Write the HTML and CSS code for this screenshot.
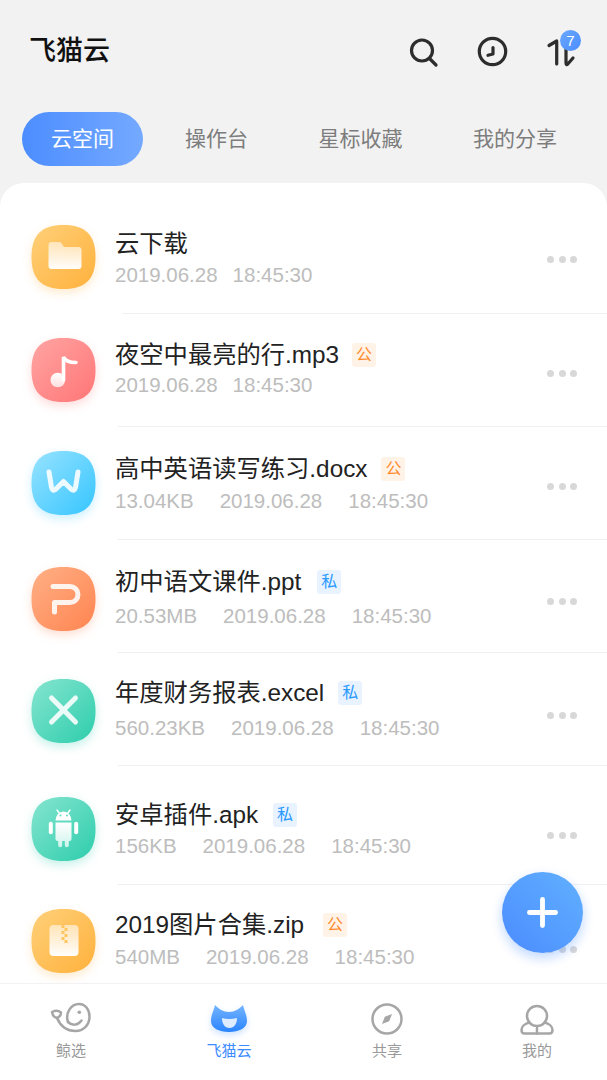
FILE: index.html
```html
<!DOCTYPE html>
<html lang="zh-CN">

<head>
    <meta charset="utf-8">
    <title>飞猫云</title>
    <link rel="stylesheet" href="styles.css">
</head>

<body>
    <!-- gradients used by the file icons -->
    <svg class="defs" aria-hidden="true">
        <defs>
            <path id="blob" d="M32 0C54 0 64 10 64 32C64 54 54 64 32 64C10 64 0 54 0 32C0 10 10 0 32 0Z" />
            <linearGradient id="g-yellow" x1="0" y1="0" x2="1" y2="1"><stop offset="0" stop-color="#ffd079" /><stop offset="1" stop-color="#ffb13c" /></linearGradient>
            <linearGradient id="g-red" x1="0" y1="0" x2="1" y2="1"><stop offset="0" stop-color="#ffa5a3" /><stop offset="1" stop-color="#ff7576" /></linearGradient>
            <linearGradient id="g-blue" x1="0" y1="0" x2="1" y2="1"><stop offset="0" stop-color="#98e3ff" /><stop offset="1" stop-color="#35c5ff" /></linearGradient>
            <linearGradient id="g-orange" x1="0" y1="0" x2="1" y2="1"><stop offset="0" stop-color="#ffb086" /><stop offset="1" stop-color="#ff8450" /></linearGradient>
            <linearGradient id="g-green" x1="0" y1="0" x2="1" y2="1"><stop offset="0" stop-color="#86e5d0" /><stop offset="1" stop-color="#2dcdac" /></linearGradient>
            <linearGradient id="g-folder" x1="0" y1="0" x2="0" y2="1"><stop offset="0" stop-color="#fff" stop-opacity=".55" /><stop offset="1" stop-color="#fff" stop-opacity=".98" /></linearGradient>
            <linearGradient id="g-fade" x1="0" y1="0" x2="0" y2="1"><stop offset="0" stop-color="#fff" /><stop offset="1" stop-color="#fff" stop-opacity=".72" /></linearGradient>
            <linearGradient id="g-cat" x1="0" y1="0" x2="0" y2="1"><stop offset="0" stop-color="#74b4ff" /><stop offset="1" stop-color="#2b84ff" /></linearGradient>
        </defs>
    </svg>

    <header class="topbar">
        <h1 class="logo">飞猫云</h1>
        <div class="actions">
            <svg class="act" viewBox="0 0 29 29"><circle cx="13" cy="13.500" r="10.500" /><path d="M20.500 21.500L27 28" /></svg>
            <svg class="act" viewBox="0 0 29 29"><circle cx="14.500" cy="14.500" r="13.200" /><path d="M15 10.500V17L10 18.300" /></svg>
            <div class="act-wrap">
                <svg class="act" viewBox="0 0 29 29"><path d="M2 8.500L9.700 4V27" /><path d="M19 3V26Q19 28.500 20.800 27L26 21" /></svg>
                <span class="count">7</span>
            </div>
        </div>
    </header>

    <nav class="tabs">
        <a class="tab on">云空间</a>
        <a class="tab">操作台</a>
        <a class="tab">星标收藏</a>
        <a class="tab">我的分享</a>
    </nav>

    <main class="sheet">
        <div class="row r1">
            <svg class="ico ico-yellow" viewBox="0 0 64 64"><use href="#blob" fill="url(#g-yellow)" /><path d="M20 17h7.500a3 3 0 0 1 2.500 1.300L32.500 22H47a3 3 0 0 1 3 3v16a3 3 0 0 1-3 3H20a3 3 0 0 1-3-3V20a3 3 0 0 1 3-3z" fill="url(#g-folder)" /></svg>
            <div class="info">
                <div class="name">云下载</div>
                <div class="meta"><span>2019.06.28</span><span>18:45:30</span></div>
            </div>
            <div class="more"><i></i><i></i><i></i></div>
        </div>
        <hr class="sep sep-first">
        <div class="row r2">
            <svg class="ico ico-red" viewBox="0 0 64 64"><use href="#blob" fill="url(#g-red)" /><circle cx="26.300" cy="42" r="7.300" fill="url(#g-fade)" /><path d="M32 42V19c2 4.500 6.500 5.500 12.500 5.500" fill="none" stroke="#fff" stroke-width="3.600" stroke-linecap="round" /></svg>
            <div class="info">
                <div class="name">夜空中最亮的行.mp3<span class="tag pub">公</span></div>
                <div class="meta"><span>2019.06.28</span><span>18:45:30</span></div>
            </div>
            <div class="more"><i></i><i></i><i></i></div>
        </div>
        <hr class="sep">
        <div class="row r3">
            <svg class="ico ico-blue" viewBox="0 0 64 64"><use href="#blob" fill="url(#g-blue)" /><path class="mark" d="M17.500 21L20 36.500Q21 41 24.500 38L32 30.500L39.500 38Q43 41 44 36.500L46.500 21" /></svg>
            <div class="info">
                <div class="name">高中英语读写练习.docx<span class="tag pub">公</span></div>
                <div class="meta wide"><span>13.04KB</span><span>2019.06.28</span><span>18:45:30</span></div>
            </div>
            <div class="more"><i></i><i></i><i></i></div>
        </div>
        <hr class="sep">
        <div class="row r4">
            <svg class="ico ico-orange" viewBox="0 0 64 64"><use href="#blob" fill="url(#g-orange)" /><path class="mark" d="M23 45V35.500H38.500a8 8 0 0 0 0-16H21.500" /></svg>
            <div class="info">
                <div class="name">初中语文课件.ppt<span class="tag pri">私</span></div>
                <div class="meta wide"><span>20.53MB</span><span>2019.06.28</span><span>18:45:30</span></div>
            </div>
            <div class="more"><i></i><i></i><i></i></div>
        </div>
        <hr class="sep">
        <div class="row r5">
            <svg class="ico ico-green" viewBox="0 0 64 64"><use href="#blob" fill="url(#g-green)" /><path class="mark" d="M20 19L44 43M44 19L20 43" /></svg>
            <div class="info">
                <div class="name">年度财务报表.excel<span class="tag pri">私</span></div>
                <div class="meta wide"><span>560.23KB</span><span>2019.06.28</span><span>18:45:30</span></div>
            </div>
            <div class="more"><i></i><i></i><i></i></div>
        </div>
        <hr class="sep">
        <div class="row r6">
            <svg class="ico ico-green" viewBox="0 0 64 64"><use href="#blob" fill="url(#g-green)" /><path d="M24 23.500a8 9 0 0 1 16 0z" fill="#fff" /><path d="M25.500 13l2.500 3.500M38.500 13l-2.500 3.500" stroke="#fff" stroke-width="1.400" stroke-linecap="round" /><path d="M24 25.500h16V42a2 2 0 0 1-2 2h-.700v4.300a2 2 0 0 1-4 0V44h-2.600v4.300a2 2 0 0 1-4 0V44H26a2 2 0 0 1-2-2z" fill="url(#g-fade)" /><rect x="17.300" y="24.700" width="4" height="12.600" rx="2" fill="#fff" /><rect x="42.700" y="24.700" width="4" height="12.600" rx="2" fill="#fff" /><circle cx="29" cy="18.500" r="1" fill="#5ed9c0" /><circle cx="35.500" cy="18.500" r="1" fill="#5ed9c0" /></svg>
            <div class="info">
                <div class="name">安卓插件.apk<span class="tag pri">私</span></div>
                <div class="meta wide"><span>156KB</span><span>2019.06.28</span><span>18:45:30</span></div>
            </div>
            <div class="more"><i></i><i></i><i></i></div>
        </div>
        <hr class="sep">
        <div class="row r7">
            <svg class="ico ico-yellow" viewBox="0 0 64 64"><use href="#blob" fill="url(#g-yellow)" /><rect x="18" y="16" width="29" height="31" rx="4" fill="url(#g-folder)" /><path d="M30 16h3v3h-3zM33 19h3v3h-3zM30 22h3v3h-3zM33 25h3v3h-3zM30 28h3v3h-3zM33 31h3v3h-3z" fill="#ffc65f" /></svg>
            <div class="info">
                <div class="name">2019图片合集.zip<span class="tag pub">公</span></div>
                <div class="meta wide"><span>540MB</span><span>2019.06.28</span><span>18:45:30</span></div>
            </div>
            <div class="more"><i></i><i></i><i></i></div>
        </div>
    </main>

    <button class="fab"><svg viewBox="0 0 32 32"><path d="M16 2.500V29.500M2.500 16H29.500" /></svg></button>

    <footer class="tabbar">
        <a class="item">
            <svg class="nav-ico" viewBox="0 0 40 30"><path d="M17 19C14 10 20 1 28 1C34.500 1 38.500 7 38.500 13.500C38.500 22.500 32 28 24.500 28C15 28 9 22 6 15" /><path d="M6 15C3.500 14.500 1.500 12 1 9C4 7.500 7.500 7.500 10 9.500C10 11.500 8.500 14 6 15" /><path d="M17 19C21 23 27 22.500 30.500 17.500" /><circle class="dot" cx="28.300" cy="9.300" r="1.800" /></svg>
            <span>鲸选</span>
        </a>
        <a class="item on">
            <svg class="nav-ico" viewBox="0 0 40 30"><path d="M6 2C10 6 14 9 20 9C26 9 30 6 34 2C35 7 38 12 38 18C38 25 30 29 20 29C10 29 2 25 2 18C2 12 5 7 6 2Z" fill="url(#g-cat)" /><path d="M13 15Q20 17 28 15C28 21 25 25 20.500 25C16 25 13 21 13 15Z" fill="#dfecff" /></svg>
            <span>飞猫云</span>
        </a>
        <a class="item">
            <svg class="nav-ico" viewBox="0 0 40 30"><circle cx="20" cy="16" r="14.500" /><path class="dot" d="M25 11L22.200 18.200L15 21L17.800 13.800Z" /></svg>
            <span>共享</span>
        </a>
        <a class="item">
            <svg class="nav-ico" viewBox="0 0 40 30"><circle cx="20" cy="13" r="10" /><path d="M12.500 19.500C8 20.500 4.500 23.500 4.500 27C4.500 29 5.500 30.500 7.500 30.500H32.500C34.500 30.500 35.500 29 35.500 27C35.500 23.500 32 20.500 27.500 19.500" /><path d="M20 25V30.500" /></svg>
            <span>我的</span>
        </a>
    </footer>
</body>

</html>
```

FILE: styles.css
```css
* {
    box-sizing: border-box;
}

html,
body {
    margin: 0;
    width: 607px;
    height: 1080px;
    overflow: hidden;
}

body {
    position: relative;
    display: flex;
    flex-direction: column;
    background-color: #f2f2f2;
    color: #222;
    font-family: "Liberation Sans", "Noto Sans CJK SC", sans-serif;
}

.defs {
    position: absolute;
    width: 0;
    height: 0;
}

/* top bar */
.topbar {
    height: 96px;
    padding: 0 31px 0 29px;
    display: flex;
    align-items: center;
    justify-content: space-between;
}

.logo {
    margin: 0;
    font-size: 27px;
    font-weight: 500;
    color: #111;
}

.actions {
    display: flex;
    gap: 40px;
    margin-top: 7px;
}

.act {
    display: block;
    width: 29px;
    height: 29px;
    overflow: visible;
    fill: none;
    stroke: #2d2d2d;
    stroke-width: 3.200;
    stroke-linecap: round;
    stroke-linejoin: round;
}

.act-wrap {
    position: relative;
}

.count {
    position: absolute;
    top: -7px;
    right: -5px;
    width: 21px;
    height: 21px;
    border-radius: 50%;
    background: linear-gradient(135deg, #6aa8ff, #4a8dff);
    color: #fff;
    font-size: 15px;
    line-height: 21px;
    text-align: center;
}

/* tabs */
.tabs {
    margin-top: 16px;
    padding-left: 22px;
    height: 54px;
    display: flex;
    gap: 13.500px;
}

.tab {
    padding: 0 28.500px;
    font-size: 21px;
    line-height: 54px;
    color: #7d7d7d;
    white-space: nowrap;
}

.tab.on {
    padding: 0 29px;
    border-radius: 27px;
    background: linear-gradient(90deg, #4c8dff, #74a9ff);
    color: #fff;
}

/* file list */
.sheet {
    margin-top: 17px;
    flex: 1;
    min-height: 0;
    padding-top: 17px;
    overflow: hidden;
    background-color: #fff;
    border-radius: 24px 24px 0 0;
}

.row {
    height: 112px;
    padding: 0 30px 0 31px;
    display: flex;
    align-items: center;
}

.sep {
    margin: 0 0 0 118px;
    height: 1px;
    border: 0;
    background-color: #f0f0f0;
}

.sep-first {
    margin-left: 122px;
}

.ico {
    flex: none;
    width: 65px;
    height: 64px;
    overflow: visible;
}

.ico-yellow {
    filter: drop-shadow(0 4px 5px rgba(255, 184, 80, .28));
}

.ico-red {
    filter: drop-shadow(0 4px 5px rgba(255, 125, 125, .28));
}

.ico-blue {
    filter: drop-shadow(0 4px 5px rgba(70, 200, 255, .28));
}

.ico-orange {
    filter: drop-shadow(0 4px 5px rgba(255, 140, 90, .28));
}

.ico-green {
    filter: drop-shadow(0 4px 5px rgba(50, 205, 175, .28));
}

.mark {
    fill: none;
    stroke: #fff;
    stroke-opacity: .88;
    stroke-width: 5;
    stroke-linecap: round;
    stroke-linejoin: round;
}

.info {
    margin-left: 19px;
    display: flex;
    flex-direction: column;
    gap: 5px;
}

.name {
    display: flex;
    align-items: center;
    font-size: 24.300px;
    line-height: 28px;
    white-space: nowrap;
}

.tag {
    margin-left: 13px;
    width: 24px;
    height: 24px;
    border-radius: 3px;
    font-size: 16px;
    line-height: 24px;
    text-align: center;
}

.pub {
    background-color: #fff3e8;
    color: #ff8a2b;
}

.pri {
    background-color: #e8f3ff;
    color: #2b9aff;
}

.meta {
    display: flex;
    gap: 15px;
    font-size: 20.500px;
    line-height: 24px;
    color: #bdbdbd;
    white-space: nowrap;
}

.meta.wide {
    gap: 26px;
}

.more {
    margin-left: auto;
    margin-top: 6px;
    display: flex;
    gap: 4.500px;
}

.more i {
    width: 7px;
    height: 7px;
    border-radius: 50%;
    background-color: #d8d8d8;
}

/* the rows of the list are not quite even */
.r1 {
    height: 113px;
}

.r1 .info {
    margin-top: 4px;
}

.r2 .info {
    margin-top: -2px;
    gap: 4px;
}

.r3 .info {
    margin-top: 1px;
    gap: 6px;
}

.r3 .tag {
    margin-left: 14px;
}

.r4 {
    padding-top: 4px;
}

.r4 .ico {
    margin-top: 2px;
}

.r4 .info {
    gap: 8px;
}

.r4 .tag {
    margin-left: 16px;
}

.r5 .ico {
    margin-top: 4px;
}

.r5 .info {
    margin-top: 1px;
    gap: 9px;
}

.r5 .tag {
    margin-left: 14px;
}

.r5 .more {
    margin-top: 12px;
}

.r6 {
    height: 118px;
    padding-top: 6px;
}

.r6 .ico {
    margin-top: 2px;
}

.r6 .info {
    margin-top: 2px;
}

.r6 .tag {
    margin-left: 15px;
}

.r6 .more {
    margin-top: 14px;
}

.r7 {
    height: 97px;
    padding-top: 13px;
}

.r7 .ico {
    margin-top: 2px;
}

.r7 .info {
    gap: 6px;
}

.r7 .tag {
    margin-left: 19px;
}

.r7 .more {
    margin-top: 18px;
}

/* floating button */
.fab {
    position: absolute;
    left: 501.500px;
    top: 872px;
    width: 81px;
    height: 81px;
    padding: 25px;
    border: 0;
    border-radius: 50%;
    background: linear-gradient(45deg, #4688ff, #5cafff);
    box-shadow: 0 5px 12px rgba(70, 140, 255, .35);
    opacity: .97;
}

.fab svg {
    display: block;
    fill: none;
    stroke: #fff;
    stroke-width: 5;
    stroke-linecap: round;
}

/* bottom bar */
.tabbar {
    height: 97px;
    padding: 19px 0 0 51px;
    display: flex;
    gap: 118px;
    background-color: #fff;
    border-top: 1px solid #f2f2f2;
}

.item {
    width: 40px;
    display: flex;
    flex-direction: column;
    align-items: center;
    gap: 8px;
    font-size: 15px;
    line-height: 20px;
    color: #999;
    white-space: nowrap;
}

.item:last-child {
    margin-left: -8px;
}

.nav-ico {
    flex: none;
    width: 40px;
    height: 30px;
    overflow: visible;
    fill: none;
    stroke: #a6a6a6;
    stroke-width: 2.500;
    stroke-linecap: round;
    stroke-linejoin: round;
}

.nav-ico .dot {
    fill: #a6a6a6;
    stroke: none;
}

.item.on {
    color: #3d8bff;
}

.item.on .nav-ico {
    stroke: none;
    filter: drop-shadow(0 3px 3px rgba(60, 140, 255, .25));
}
```
